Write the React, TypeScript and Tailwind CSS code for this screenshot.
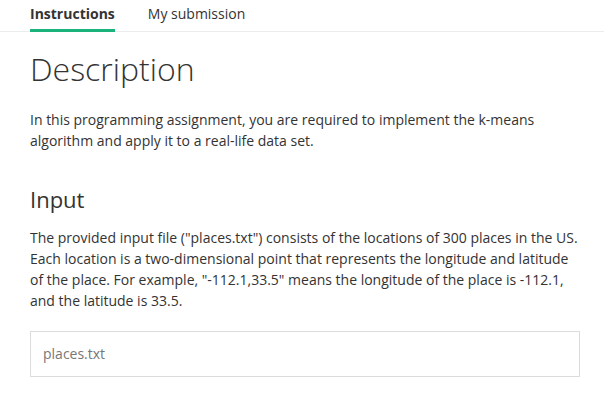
export default function App() {
  const tabs = [
    { title: "Instructions", active: true },
    { title: "My submission", active: false },
  ]

  return (
    <div className="min-h-screen w-[604px] bg-white text-[#333] font-['Open_Sans',sans-serif]">
      {/* Tabs */}
      <nav className="flex h-[32px] gap-[33px] border-b border-[#ececec] pl-[30px]">
        {tabs.map((tab) => (
          <div
            key={tab.title}
            className={`pt-[3px] text-[14px] leading-[21px] ${
              tab.active
                ? "h-[32px] border-b-[3px] border-[#19b37b] font-bold text-[#333]"
                : "text-[#333]"
            }`}
          >
            {tab.title}
          </div>
        ))}
      </nav>

      <div className="w-[580px] pl-[30px]">
        <h1 className="mt-[18px] text-[32px] font-light leading-[38px]">Description</h1>
        <p className="mt-[21px] text-[14px] leading-[21px]">
          In this programming assignment, you are required to implement the k-means algorithm and apply it to a
          real-life data set.
        </p>

        <h2 className="mt-[35px] text-[22px] leading-[26px]">Input</h2>
        <p className="mt-[15px] text-[14px] leading-[21px]">
          The provided input file ("places.txt") consists of the locations of 300 places in the US. Each location is a
          two-dimensional point that represents the longitude and latitude of the place. For example,
          "-112.1,33.5" means the longitude of the place is -112.1, and the latitude is 33.5.
        </p>

        <div className="mt-[20px] border border-[#dcdcdc] px-[12px] pt-[11px] pb-[12px] text-[14px] leading-[21px] text-[#777]">
          places.txt
        </div>
      </div>
    </div>
  )
}
